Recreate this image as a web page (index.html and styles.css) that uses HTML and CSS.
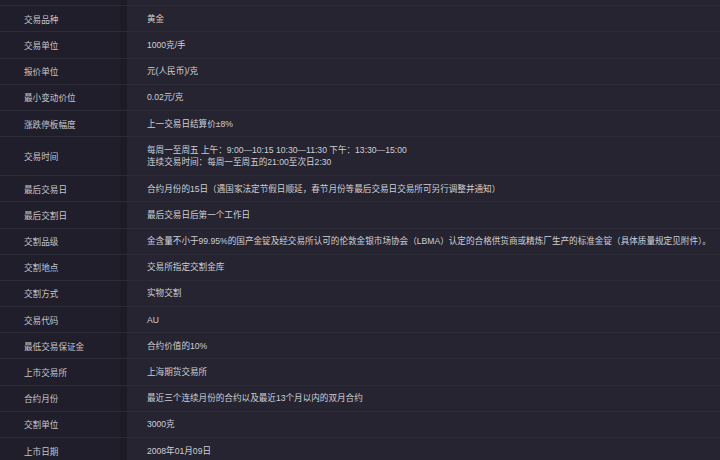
FILE: index.html
```html
<!DOCTYPE html>
<html lang="zh-CN">
<head>
<meta charset="utf-8">
<title>黄金合约</title>
<link rel="stylesheet" href="styles.css">
</head>
<body>
<div class="spec">
  <div class="row partial"><div class="k"></div><div class="v"></div></div>
  <div class="row"><div class="k">交易品种</div><div class="v">黄金</div></div>
  <div class="row"><div class="k">交易单位</div><div class="v">1000克/手</div></div>
  <div class="row"><div class="k">报价单位</div><div class="v">元(人民币)/克</div></div>
  <div class="row"><div class="k">最小变动价位</div><div class="v">0.02元/克</div></div>
  <div class="row"><div class="k">涨跌停板幅度</div><div class="v">上一交易日结算价±8%</div></div>
  <div class="row tall"><div class="k">交易时间</div><div class="v">每周一至周五 上午：9:00—10:15 10:30—11:30 下午：13:30—15:00<br>连续交易时间：每周一至周五的21:00至次日2:30</div></div>
  <div class="row"><div class="k">最后交易日</div><div class="v">合约月份的15日（遇国家法定节假日顺延，春节月份等最后交易日交易所可另行调整并通知）</div></div>
  <div class="row"><div class="k">最后交割日</div><div class="v">最后交易日后第一个工作日</div></div>
  <div class="row"><div class="k">交割品级</div><div class="v">金含量不小于99.95%的国产金锭及经交易所认可的伦敦金银市场协会（LBMA）认定的合格供货商或精炼厂生产的标准金锭（具体质量规定见附件）。</div></div>
  <div class="row"><div class="k">交割地点</div><div class="v">交易所指定交割金库</div></div>
  <div class="row"><div class="k">交割方式</div><div class="v">实物交割</div></div>
  <div class="row"><div class="k">交易代码</div><div class="v">AU</div></div>
  <div class="row"><div class="k">最低交易保证金</div><div class="v">合约价值的10%</div></div>
  <div class="row"><div class="k">上市交易所</div><div class="v">上海期货交易所</div></div>
  <div class="row"><div class="k">合约月份</div><div class="v">最近三个连续月份的合约以及最近13个月以内的双月合约</div></div>
  <div class="row"><div class="k">交割单位</div><div class="v">3000克</div></div>
  <div class="row"><div class="k">上市日期</div><div class="v">2008年01月09日</div></div>
</div>
</body>
</html>
```
FILE: styles.css
```css
html, body {
  margin: 0;
  padding: 0;
  background: #1c1b26;
  height: 460px;
  overflow: hidden;
}
.spec {
  display: flex;
  flex-direction: column;
  margin-top: -21px;
  font-family: "Liberation Sans", "Noto Sans CJK SC", sans-serif;
  font-size: 8.6px;
  color: #cfcfd6;
}
.row {
  display: grid;
  grid-template-columns: 127px 1fr;
  height: 26.2px;
  flex: none;
  border-top: 1px solid #2c2b38;
  box-sizing: border-box;
  box-shadow: inset 0 -1px 0 #1b1a23;
}
.row.tall {
  height: 39px;
}
.k {
  display: flex;
  align-items: center;
  padding-left: 24px;
  background: #1f1e2a;
  border-right: 7px solid #1c1b26;
  color: #c6c6cf;
  white-space: nowrap;
}
.v {
  display: flex;
  align-items: center;
  padding-left: 20px;
  background: #252430;
  white-space: nowrap;
  line-height: 12px;
}
```
